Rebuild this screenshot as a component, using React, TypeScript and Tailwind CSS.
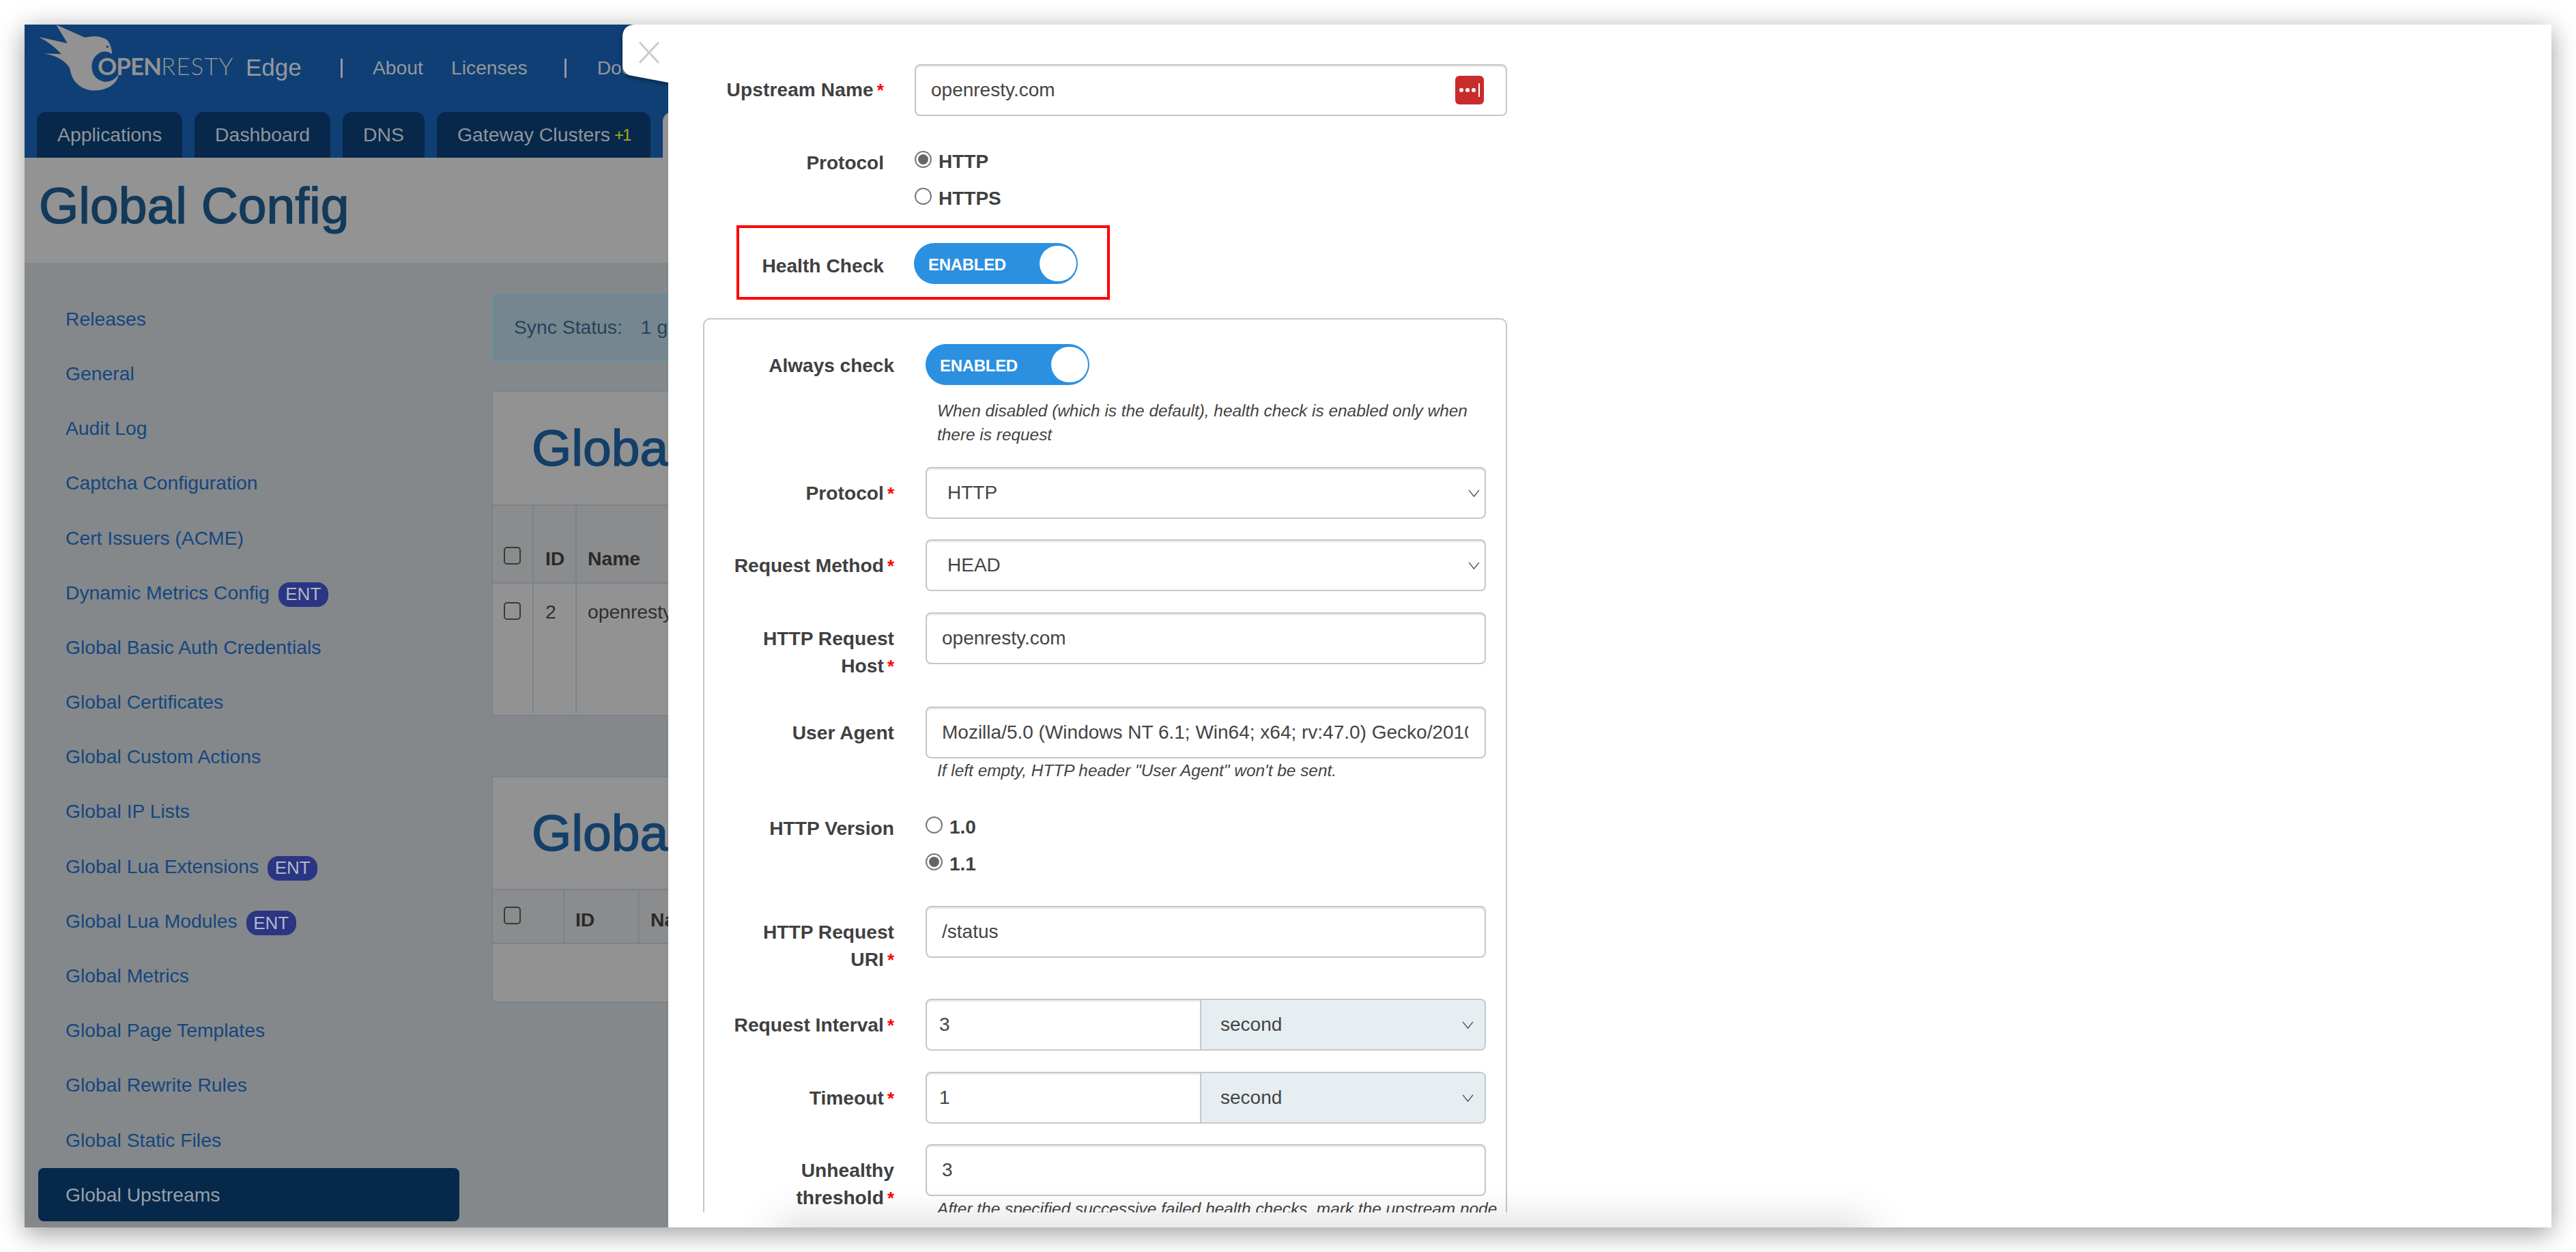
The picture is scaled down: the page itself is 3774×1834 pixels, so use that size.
import React from 'react';

const sideItems = [
  { name: 'Releases' },
  { name: 'General' },
  { name: 'Audit Log' },
  { name: 'Captcha Configuration' },
  { name: 'Cert Issuers (ACME)' },
  { name: 'Dynamic Metrics Config', ent: true },
  { name: 'Global Basic Auth Credentials' },
  { name: 'Global Certificates' },
  { name: 'Global Custom Actions' },
  { name: 'Global IP Lists' },
  { name: 'Global Lua Extensions', ent: true },
  { name: 'Global Lua Modules', ent: true },
  { name: 'Global Metrics' },
  { name: 'Global Page Templates' },
  { name: 'Global Rewrite Rules' },
  { name: 'Global Static Files' },
  { name: 'Global Upstreams', active: true },
];

const Logo = () => (
  <div className="relative w-[290px] h-[98px] shrink-0">
    <svg viewBox="100 48 370 294" className="w-[123px] h-[98px]">
      <path
        fill="#929292"
        d="M185 48 L312 105 Q370 90 410 115 Q428 135 432 178 Q412 162 385 168 Q340 190 342 235 Q345 290 400 300 Q440 300 462 265 Q450 320 385 335 Q310 350 265 295 Q250 270 245 240 Q215 190 132 175 L208 178 Q170 135 108 102 L235 130 Z"
      />
      <circle cx="411" cy="145" r="5" fill="#0f3f75" />
    </svg>
    <div className="absolute left-[89px] top-[40px] text-[35px] leading-[40px] text-[#929292] font-['Lato',sans-serif] whitespace-nowrap tracking-[-1px]">
      <span className="font-bold">OPEN</span>
      <span className="font-light tracking-[1px]">RESTY</span>
    </div>
  </div>
);

const NavTab = ({ children, className = '' }: { children: React.ReactNode; className?: string }) => (
  <div className={`h-[67px] px-[30px] rounded-t-[14px] text-[#8f959b] text-[28.4px] flex items-center whitespace-nowrap ${className}`}>
    {children}
  </div>
);

const PageCheckbox = () => <div className="w-[25px] h-[26px] rounded-[5px] border-2 border-[#3a3a3a] shrink-0" />;

const BackgroundPage = () => (
  <div className="w-full h-full bg-[#84888a] text-[28.3px]">
    <header className="h-[195px] bg-[#0f3f75] pl-[18px] flex flex-col">
      <div className="h-[128px] flex items-start text-[#94989c]">
        <Logo />
        <div className="flex items-center h-[127px]">
          <span className="text-[35px] ml-[16px] w-[139px]">Edge</span>
          <span className="w-[3px] h-[28px] bg-[#94989c]" />
          <span className="ml-[44px]">About</span>
          <span className="ml-[41px]">Licenses</span>
          <span className="w-[3px] h-[28px] bg-[#94989c] ml-[54px]" />
          <span className="ml-[45px]">Docs</span>
        </div>
      </div>
      <nav className="flex gap-[18px]">
        <NavTab className="bg-[#07284b]">Applications</NavTab>
        <NavTab className="bg-[#07284b]">Dashboard</NavTab>
        <NavTab className="bg-[#07284b]">DNS</NavTab>
        <NavTab className="bg-[#07284b]">
          Gateway Clusters<span className="ml-[6px] text-[24px] tracking-[-2px] text-[#a5a80f]">+1</span>
        </NavTab>
        <NavTab className="bg-[#939393]">Global Config</NavTab>
      </nav>
    </header>

    <div className="h-[154px] bg-[#939393] pl-[21px] pb-[14px] flex items-center">
      <h1 className="text-[75px] text-[#133a5a] [-webkit-text-stroke:1.5px_#133a5a]">Global Config</h1>
    </div>

    <div className="flex">
      <aside className="w-[617px] ml-[20px] pt-[43px] shrink-0">
        {sideItems.map((item) => (
          <div
            key={item.name}
            className={`h-[78px] mb-[2.2px] pl-[40px] flex items-center rounded-[8px] whitespace-nowrap ${
              item.active ? 'bg-[#06284b] text-[#9a9fa5]' : 'text-[#15467f]'
            }`}
          >
            {item.name}
            {item.ent && (
              <span className="ml-[13px] mt-[6px] h-[36px] w-[73px] rounded-[16px] bg-[#2a3583] text-[#b4b8c4] text-[26px] flex items-center justify-center">
                ENT
              </span>
            )}
          </div>
        ))}
      </aside>

      <main className="ml-[47px] w-[1400px] pt-[43px] shrink-0">
        <div className="h-[102px] rounded-[8px] border-2 border-[#6b929e] bg-[#76868f] pl-[31px] flex items-center text-[#24435c]">
          Sync Status:<span className="ml-[27px]">1 gateway</span>
        </div>

        <section className="mt-[42px] h-[477px] border-2 border-[#7a838c] bg-[#929292]">
          <div className="h-[167px] pl-[57px] flex items-center border-b-2 border-[#7a838c]">
            <h2 className="text-[75px] text-[#133f69] [-webkit-text-stroke:1.5px_#133f69]">Global Upstreams</h2>
          </div>
          <div className="h-[114px] flex bg-[#8a8c8d] border-b-2 border-[#7a838c] font-bold text-[#2a2a2a]">
            <div className="w-[60px] pl-[16px] pt-[60px] border-r-2 border-[#7a838c]"><PageCheckbox /></div>
            <div className="w-[63px] pl-[17px] pt-[56px] border-r-2 border-[#7a838c]">ID</div>
            <div className="pl-[16px] pt-[56px]">Name</div>
          </div>
          <div className="h-[190px] flex text-[#2f2f2f]">
            <div className="w-[60px] pl-[16px] pt-[27px] border-r-2 border-[#7a838c]"><PageCheckbox /></div>
            <div className="w-[63px] pl-[17px] pt-[20px] border-r-2 border-[#7a838c]">2</div>
            <div className="pl-[16px] pt-[20px]">openresty.com</div>
          </div>
        </section>

        <section className="mt-[88px] h-[332px] border-2 border-[#7a838c] bg-[#929292] rounded-b-[8px]">
          <div className="h-[165px] pl-[57px] flex items-center border-b-2 border-[#7a838c]">
            <h2 className="text-[75px] text-[#133f69] [-webkit-text-stroke:1.5px_#133f69]">Global Variables</h2>
          </div>
          <div className="h-[79px] flex bg-[#8a8c8d] border-b-2 border-[#7a838c] font-bold text-[#2a2a2a]">
            <div className="w-[105px] pl-[16px] pt-[24px] border-r-2 border-[#7a838c]"><PageCheckbox /></div>
            <div className="w-[110px] pl-[16px] pt-[22px] border-r-2 border-[#7a838c]">ID</div>
            <div className="pl-[16px] pt-[22px]">Name</div>
          </div>
        </section>
      </main>
    </div>
  </div>
);

const Required = () => <span className="ml-[5px] text-[26px] text-[#f00] font-bold">*</span>;

const FieldLabel = ({ lines, required }: { lines: string[]; required?: boolean }) => (
  <div className="w-[278px] mr-[46px] shrink-0 pt-[18px] text-right font-bold text-[#404040] text-[28.2px] leading-[40px]">
    {lines.map((line, i) => (
      <div key={line}>
        {line}
        {required && i === lines.length - 1 && <Required />}
      </div>
    ))}
  </div>
);

const inputBox =
  'h-[76px] w-[821px] rounded-[8px] border-2 border-[#c5c8cb] shadow-[inset_0_2px_2px_rgba(0,0,0,0.1)] flex items-center text-[#444]';

const Chevron = () => (
  <svg viewBox="0 0 18 14" className="w-[17px] h-[13px] shrink-0" fill="none" stroke="#444" strokeWidth="1.4">
    <path d="M1 2 L9 12 L17 2" />
  </svg>
);

const Toggle = () => (
  <div className="w-[240px] h-[60px] rounded-full bg-[#2b90e0] flex items-center justify-between pl-[21px] pr-[2px]">
    <span className="pt-[3px] text-white font-bold text-[24px] tracking-[-0.3px]">ENABLED</span>
    <span className="w-[54px] h-[52px] rounded-full bg-white" />
  </div>
);

const Radio = ({ checked, label, className = '' }: { checked?: boolean; label: string; className?: string }) => (
  <div className={`h-[54px] flex items-center font-bold text-[#404040] ${className}`}>
    <span className="w-[25px] h-[25px] -mt-[5px] rounded-full border-2 border-[#777] flex items-center justify-center shrink-0">
      {checked && <span className="w-[15px] h-[15px] rounded-full bg-[#666]" />}
    </span>
    <span className="ml-[10px] pt-[2px]">{label}</span>
  </div>
);

const TextRow = ({ lines, value, required, className = '' }: { lines: string[]; value: string; required?: boolean; className?: string }) => (
  <div className={`flex ${className}`}>
    <FieldLabel lines={lines} required={required} />
    <div className={`${inputBox} pl-[22px]`}>{value}</div>
  </div>
);

const SelectRow = ({ label, value, className = '' }: { label: string; value: string; className?: string }) => (
  <div className={`flex ${className}`}>
    <FieldLabel lines={[label]} required />
    <div className={`${inputBox} pl-[30px] pr-[7px] justify-between`}>
      {value}
      <Chevron />
    </div>
  </div>
);

const UnitRow = ({ label, value, className = '' }: { label: string; value: string; className?: string }) => (
  <div className={`flex ${className}`}>
    <FieldLabel lines={[label]} required />
    <div className={`${inputBox} overflow-hidden`}>
      <div className="w-[402px] h-full pl-[18px] flex items-center border-r-2 border-[#c5c8cb]">{value}</div>
      <div className="flex-1 h-full bg-[#e7eef2] pl-[28px] pr-[16px] flex items-center justify-between">
        second
        <Chevron />
      </div>
    </div>
  </div>
);

const HelpText = ({ children, className = '' }: { children: React.ReactNode; className?: string }) => (
  <div className={`ml-[341px] w-[825px] text-[24.4px] leading-[35px] italic text-[#444] ${className}`}>{children}</div>
);

const CloseTab = () => (
  <div className="absolute left-[875px] top-0 w-[105px] h-[92px]">
    <svg viewBox="0 0 105 92" className="w-full h-full drop-shadow-[0_2px_3px_rgba(0,0,0,0.45)]">
      <path d="M20 0 H105 V92 L10 74 Q1 69 1 60 V19 Q1 0 20 0 Z" fill="#fff" />
      <path d="M26 26 L54 56 M54 26 L26 56" stroke="#ccc" strokeWidth="3" fill="none" />
    </svg>
  </div>
);

const Drawer = () => (
  <div className="absolute left-[943px] top-0 right-0 bottom-0 bg-white text-[28px] overflow-hidden">
    <div className="h-[1740px] overflow-hidden pt-[58px]">
      {/* Upstream fields */}
      <div className="flex">
        <div className="w-[316px] mr-[45px] pt-[18px] text-right font-bold text-[#404040] leading-[40px] shrink-0 tracking-[0.15px]">
          Upstream Name<Required />
        </div>
        <div className="h-[76px] w-[868px] rounded-[8px] border-2 border-[#c5c8cb] shadow-[inset_0_2px_2px_rgba(0,0,0,0.1)] pl-[22px] pr-[32px] flex items-center justify-between text-[#444]">
          openresty.com
          <svg viewBox="0 0 42 42" className="w-[42px] h-[42px]">
            <rect width="42" height="42" rx="6" fill="#c92c2c" />
            <circle cx="9" cy="21" r="3" fill="#fff" />
            <circle cx="18" cy="21" r="3" fill="#fff" />
            <circle cx="27" cy="21" r="3" fill="#fff" />
            <rect x="34" y="11" width="2" height="20" fill="#fff" />
          </svg>
        </div>
      </div>

      <div className="flex mt-[39px]">
        <div className="w-[316px] mr-[45px] pt-[10px] text-right font-bold text-[#404040] leading-[40px] shrink-0">Protocol</div>
        <div>
          <Radio checked label="HTTP" />
          <Radio label="HTTPS" />
        </div>
      </div>

      <div className="flex items-center mt-[39px] h-[60px]">
        <div className="w-[316px] mr-[44px] pt-[6px] text-right font-bold text-[#404040] text-[28.2px] shrink-0">Health Check</div>
        <Toggle />
      </div>

      {/* Health check settings */}
      <div className="ml-[51px] mt-[50px] w-[1178px] h-[1400px] rounded-[10px] border-2 border-[#c5c8cb] pt-[36px]">
        <div className="flex items-center h-[60px]">
          <div className="w-[278px] mr-[46px] pt-[4px] text-right font-bold text-[#404040] shrink-0">Always check</div>
          <Toggle />
        </div>
        <HelpText className="mt-[20px]">When disabled (which is the default), health check is enabled only when there is request</HelpText>

        <SelectRow label="Protocol" value="HTTP" className="mt-[30px]" />
        <SelectRow label="Request Method" value="HEAD" className="mt-[30px]" />
        <TextRow lines={['HTTP Request', 'Host']} value="openresty.com" required className="mt-[31px]" />

        <div className="flex mt-[39px]">
          <FieldLabel lines={['User Agent']} />
          <div className={`${inputBox} pl-[22px] pr-[24px]`}>
            <div className="overflow-hidden whitespace-nowrap">Mozilla/5.0 (Windows NT 6.1; Win64; x64; rv:47.0) Gecko/20100101 Firefox/47.0</div>
          </div>
        </div>
        <HelpText className="mt-[0px]">If left empty, HTTP header "User Agent" won't be sent.</HelpText>

        <div className="flex mt-[29px]">
          <FieldLabel lines={['HTTP Version']} />
          <div className="pt-[9px]">
            <Radio label="1.0" />
            <Radio checked label="1.1" />
          </div>
        </div>

        <TextRow lines={['HTTP Request', 'URI']} value="/status" required className="mt-[35px]" />
        <UnitRow label="Request Interval" value="3" className="mt-[37px]" />
        <UnitRow label="Timeout" value="1" className="mt-[31px]" />
        <TextRow lines={['Unhealthy', 'threshold']} value="3" required className="mt-[30px]" />
        <HelpText className="-mt-[22px]">After the specified successive failed health checks, mark the upstream node</HelpText>
      </div>
    </div>

    {/* footer shadow peeking from below the window edge */}
    <div className="absolute left-[160px] bottom-[-30px] w-[1600px] h-[30px] bg-black shadow-[0_0_60px_rgba(0,0,0,0.25)]" />

    {/* red annotation around Health Check */}
    <div className="absolute left-[100px] top-[294px] w-[547px] h-[109px] border-4 border-[#f00]" />
  </div>
);

export default function App() {
  return (
    <div className="w-screen h-screen bg-white p-[36px] overflow-hidden font-['Liberation_Sans',Arial,sans-serif]">
      <div className="relative w-full h-full overflow-hidden shadow-[0_8px_36px_rgba(0,0,0,0.4)]">
        <BackgroundPage />
        <CloseTab />
        <Drawer />
      </div>
    </div>
  );
}
